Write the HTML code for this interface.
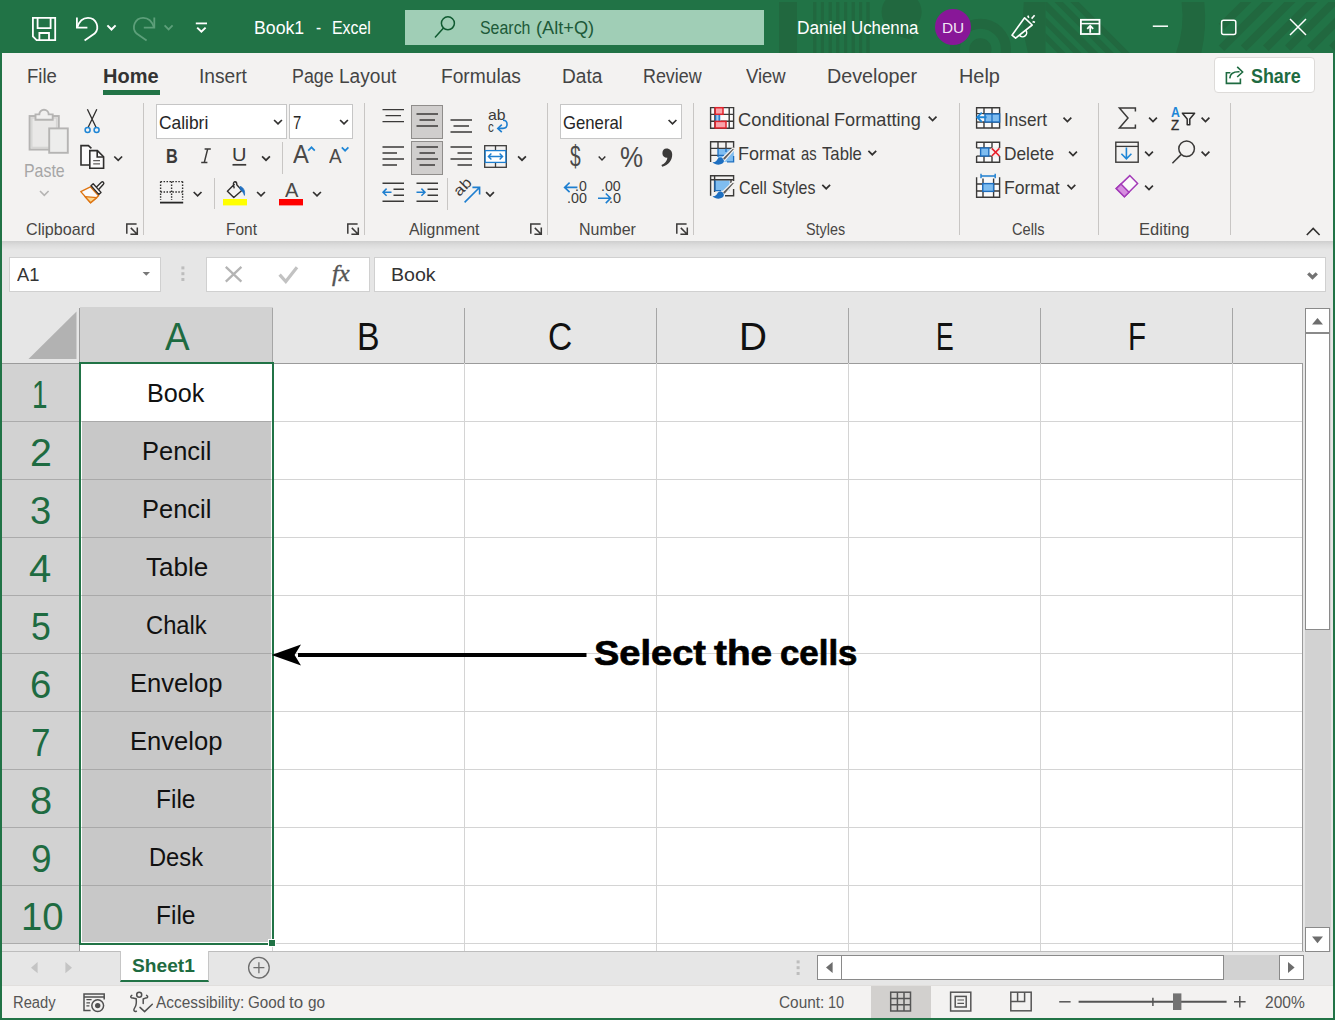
<!DOCTYPE html>
<html lang="en">
<head>
<meta charset="utf-8">
<title>Book1 - Excel</title>
<style>
html,body{margin:0;padding:0}
body{width:1335px;height:1020px;position:relative;overflow:hidden;background:#217346;font-family:"Liberation Sans",sans-serif}
div,span,svg{position:absolute;box-sizing:border-box}
.t{white-space:pre;line-height:1;transform-origin:0 0}
#title{left:0;top:0;width:1335px;height:53px;background:#217346}
#search{left:405px;top:10px;width:359px;height:35px;background:#a0ceb6}
#avatar{left:935px;top:9px;width:36px;height:36px;border-radius:50%;background:#881798}
#ribbon{left:2px;top:53px;width:1331px;height:188px;background:#f3f2f1}
#homeul{left:103px;top:90px;width:57px;height:5px;background:#217346}
#share{left:1214px;top:57px;width:101px;height:36px;background:#fff;border:1px solid #dddbd9;border-radius:4px}
.vsep{width:1px;background:#c8c6c4}
.box{background:#fff;border:1px solid #c6c6c6}
.sel{background:#d0cecd;border:1px solid #8f8d8b}
#shadow{left:2px;top:241px;width:1331px;height:9px;background:linear-gradient(#cecece,#dcdcdc 45%,#e6e6e6)}
#work{left:2px;top:241px;width:1331px;height:744px;background:#e6e6e6}
#grid{left:80px;top:363px;width:1223px;height:588px;background:#fff}
.hl{left:80px;width:1222px;height:1px;background:#d4d4d4}
.vl{top:363px;width:1px;height:588px;background:#d4d4d4}
.hv{top:308px;width:1px;height:55px;background:#a6a6a6}
.rl{left:2px;width:78px;height:1px;background:#ababab}
#status{left:2px;top:985px;width:1331px;height:33px;background:#f3f2f1;border-top:1px solid #e1dfdd}
</style>
</head>
<body>

<!-- ======================= TITLE BAR ======================= -->
<div id="title"></div>
<svg style="left:0;top:0" width="1335" height="53" viewBox="0 0 1335 53">
<!-- title bar decorative pattern -->
<defs>
  <clipPath id="cpA"><rect x="1045.500" y="2" width="95" height="51"/></clipPath>
</defs>
<g fill="#21683f" stroke="none">
  <rect x="779" y="2" width="18" height="51"/>
  <rect x="813.2" y="2" width="3.2" height="51"/><rect x="820.8" y="2" width="3.2" height="51"/><rect x="828.6" y="2" width="3.2" height="51"/><rect x="836.2" y="2" width="3.2" height="51"/><rect x="844.0" y="2" width="3.2" height="51"/><rect x="851.6" y="2" width="3.2" height="51"/><rect x="859.0" y="2" width="3.2" height="51"/><rect x="866.4" y="2" width="3.2" height="51"/>
  <circle cx="901.6" cy="12" r="20"/>
  <path d="M893,28 L915,28 L912,40 L898,36 Z"/>
  <circle cx="980.400" cy="49.300" r="25.550" fill="none" stroke="#21683f" stroke-width="10.100"/>
  <circle cx="980.400" cy="49.300" r="11.100"/>
  <path d="M1023.800,2 H1045.500 V53 H1028 Q1021,28 1023.800,2 Z"/>
  <g clip-path="url(#cpA)"><path d="M1006.7,2 L1014.5,2 L1065.5,53 L1057.7,53 Z"/><path d="M1022.4,2 L1030.3,2 L1081.3,53 L1073.4,53 Z"/><path d="M1037.7,2 L1047.1,2 L1098.1,53 L1088.7,53 Z"/><path d="M1054.6,2 L1062.8,2 L1113.8,53 L1105.6,53 Z"/><path d="M1070.3,2 L1078.6,2 L1129.6,53 L1121.3,53 Z"/></g>
  <path d="M1181.600,2 H1204.300 Q1207,28 1201.300,53 H1176 Q1185,28 1181.600,2 Z"/>
  <path d="M1240.5,2 L1251.5,2 L1224.2,29.3 L1218.7,23.8 Z"/><path d="M1262.3,2 L1273.3,2 L1224.3,51 L1218.8,45.500 Z"/><path d="M1284.4,2 L1295.4,2 L1246.4,51 L1240.9,45.500 Z"/><path d="M1306.5,2 L1317.5,2 L1268.5,51 L1263.0,45.500 Z"/><path d="M1328.6,2 L1339.6,2 L1290.6,51 L1285.1,45.500 Z"/><path d="M1350.7,2 L1361.7,2 L1312.7,51 L1307.2,45.500 Z"/><path d="M1372.8,2 L1383.8,2 L1334.8,51 L1329.3,45.500 Z"/>
</g>
</svg>
<div id="search"></div>
<div id="avatar"></div>

<!-- ======================= RIBBON ======================= -->
<div id="ribbon"></div>
<div id="homeul"></div>
<div id="share"></div>

<!-- group separators -->
<div class="vsep" style="left:143px;top:103px;height:132px"></div>
<div class="vsep" style="left:364px;top:103px;height:132px"></div>
<div class="vsep" style="left:547px;top:103px;height:132px"></div>
<div class="vsep" style="left:693px;top:103px;height:132px"></div>
<div class="vsep" style="left:959px;top:103px;height:132px"></div>
<div class="vsep" style="left:1098px;top:103px;height:132px"></div>
<div class="vsep" style="left:1230px;top:103px;height:132px"></div>
<!-- small separators -->
<div class="vsep" style="left:282px;top:142px;height:32px"></div>
<div class="vsep" style="left:214px;top:178px;height:31px"></div>
<div class="vsep" style="left:447px;top:178px;height:32px"></div>

<!-- combo boxes -->
<div class="box" style="left:156px;top:104px;width:131px;height:35px"></div>
<div class="box" style="left:289px;top:104px;width:64px;height:35px"></div>
<div class="box" style="left:560px;top:104px;width:122px;height:35px"></div>
<!-- pressed alignment buttons -->
<div class="sel" style="left:411px;top:105px;width:32px;height:34px"></div>
<div class="sel" style="left:411px;top:141px;width:32px;height:34px"></div>


<!-- ======================= FORMULA BAR / SHEET ======================= -->
<div id="work"></div>
<div id="shadow"></div>
<div class="box" style="left:9px;top:257px;width:152px;height:35px;border-color:#d0d0d0"></div>
<div class="box" style="left:206px;top:257px;width:164px;height:35px;border-color:#d0d0d0"></div>
<div class="box" style="left:374px;top:257px;width:952px;height:35px;border-color:#d0d0d0"></div>

<!-- headers -->
<div style="left:80px;top:307px;width:193px;height:56px;background:#d2d2d2"></div>
<div style="left:2px;top:363px;width:78px;height:581px;background:#d2d2d2"></div>
<div style="left:79px;top:308px;width:1px;height:643px;background:#9b9b9b"></div>
<div class="hv" style="left:272px"></div>
<div class="hv" style="left:464px"></div>
<div class="hv" style="left:656px"></div>
<div class="hv" style="left:848px"></div>
<div class="hv" style="left:1040px"></div>
<div class="hv" style="left:1232px"></div>
<svg style="left:28px;top:311px" width="50" height="49"><polygon points="48.5,0.5 48.5,48 0.5,48" fill="#b2b2b2"/></svg>

<!-- grid -->
<div id="grid"></div>
<div style="left:2px;top:363px;width:1301px;height:1px;background:#9b9b9b"></div>
<div class="hl" style="top:421px"></div>
<div class="rl" style="top:421px"></div>
<div class="hl" style="top:479px"></div>
<div class="rl" style="top:479px"></div>
<div class="hl" style="top:537px"></div>
<div class="rl" style="top:537px"></div>
<div class="hl" style="top:595px"></div>
<div class="rl" style="top:595px"></div>
<div class="hl" style="top:653px"></div>
<div class="rl" style="top:653px"></div>
<div class="hl" style="top:711px"></div>
<div class="rl" style="top:711px"></div>
<div class="hl" style="top:769px"></div>
<div class="rl" style="top:769px"></div>
<div class="hl" style="top:827px"></div>
<div class="rl" style="top:827px"></div>
<div class="hl" style="top:885px"></div>
<div class="rl" style="top:885px"></div>
<div class="hl" style="top:943px"></div>
<div class="rl" style="top:943px"></div>
<div class="vl" style="left:272px"></div>
<div class="vl" style="left:464px"></div>
<div class="vl" style="left:656px"></div>
<div class="vl" style="left:848px"></div>
<div class="vl" style="left:1040px"></div>
<div class="vl" style="left:1232px"></div>
<div style="left:1302px;top:363px;width:1px;height:588px;background:#9b9b9b"></div>

<!-- selection -->
<div style="left:82px;top:421px;width:189px;height:521px;background:#c8c8c8"></div>
<div style="left:82px;top:421px;width:189px;height:1px;background:#a9a9a9"></div>
<div style="left:82px;top:479px;width:189px;height:1px;background:#a9a9a9"></div>
<div style="left:82px;top:537px;width:189px;height:1px;background:#a9a9a9"></div>
<div style="left:82px;top:595px;width:189px;height:1px;background:#a9a9a9"></div>
<div style="left:82px;top:653px;width:189px;height:1px;background:#a9a9a9"></div>
<div style="left:82px;top:711px;width:189px;height:1px;background:#a9a9a9"></div>
<div style="left:82px;top:769px;width:189px;height:1px;background:#a9a9a9"></div>
<div style="left:82px;top:827px;width:189px;height:1px;background:#a9a9a9"></div>
<div style="left:82px;top:885px;width:189px;height:1px;background:#a9a9a9"></div>
<div style="left:82px;top:943px;width:189px;height:1px;background:#a9a9a9"></div>
<div style="left:79px;top:362px;width:195px;height:583px;border:2px solid #217346"></div>
<div style="left:268px;top:939px;width:8px;height:8px;background:#217346;border:1px solid #fff"></div>

<!-- scrollbars -->
<div style="left:1305px;top:308px;width:26px;height:644px;background:#d2d2d2"></div>
<div class="box" style="left:1305px;top:308px;width:25px;height:25px;border-color:#8a8a8a"></div>
<div class="box" style="left:1305px;top:333px;width:25px;height:297px;border-color:#8a8a8a"></div>
<div class="box" style="left:1305px;top:927px;width:25px;height:25px;border-color:#8a8a8a"></div>

<div style="left:817px;top:955px;width:487px;height:25px;background:#d2d2d2"></div>
<div class="box" style="left:817px;top:955px;width:25px;height:25px;border-color:#8a8a8a"></div>
<div class="box" style="left:841px;top:955px;width:383px;height:25px;border-color:#8a8a8a"></div>
<div class="box" style="left:1279px;top:955px;width:25px;height:25px;border-color:#8a8a8a"></div>

<!-- sheet tab -->
<div style="left:2px;top:951px;width:1302px;height:1px;background:#bdbdbd"></div>
<div style="left:120px;top:951px;width:89px;height:31px;background:#fff;border-left:1px solid #c6c6c6;border-right:1px solid #c6c6c6;border-bottom:2px solid #217346"></div>

<!-- ======================= STATUS BAR ======================= -->
<div id="status"></div>
<div style="left:871px;top:986px;width:60px;height:32px;background:#d2d0ce"></div>

<span class="t" style="left:253.78px;top:17.95px;font-size:19.2px;font-weight:400;color:#fff;transform:scaleX(0.9216);">Book1</span>
<span class="t" style="left:316.20px;top:17.95px;font-size:19.2px;font-weight:400;color:#fff;transform:scaleX(0.8000);">-</span>
<span class="t" style="left:331.97px;top:17.95px;font-size:19.2px;font-weight:400;color:#fff;transform:scaleX(0.8285);">Excel</span>
<span class="t" style="left:479.70px;top:17.95px;font-size:19.2px;font-weight:400;color:#1d5a39;transform:scaleX(0.8300);">Search</span>
<span class="t" style="left:535.65px;top:17.95px;font-size:19.2px;font-weight:400;color:#1d5a39;transform:scaleX(0.9481);">(Alt+Q)</span>
<span class="t" style="left:797.20px;top:17.65px;font-size:19.2px;font-weight:400;color:#fff;transform:scaleX(0.9015);">Daniel</span>
<span class="t" style="left:850.62px;top:17.65px;font-size:19.2px;font-weight:400;color:#fff;transform:scaleX(0.8787);">Uchenna</span>
<span class="t" style="left:942.09px;top:20.13px;font-size:15.2px;font-weight:400;color:#f3e6f5;transform:scaleX(1.0116);">DU</span>
<span class="t" style="left:27.05px;top:66.91px;font-size:19.6px;font-weight:400;color:#444;transform:scaleX(0.9454);">File</span>
<span class="t" style="left:102.98px;top:66.91px;font-size:19.6px;font-weight:700;color:#333;transform:scaleX(1.0198);">Home</span>
<span class="t" style="left:199.02px;top:66.91px;font-size:19.6px;font-weight:400;color:#444;transform:scaleX(0.9782);">Insert</span>
<span class="t" style="left:291.79px;top:66.91px;font-size:19.6px;font-weight:400;color:#444;transform:scaleX(0.9094);">Page</span>
<span class="t" style="left:339.43px;top:66.91px;font-size:19.6px;font-weight:400;color:#444;transform:scaleX(0.9746);">Layout</span>
<span class="t" style="left:440.72px;top:66.91px;font-size:19.6px;font-weight:400;color:#444;transform:scaleX(0.9782);">Formulas</span>
<span class="t" style="left:561.82px;top:66.91px;font-size:19.6px;font-weight:400;color:#444;transform:scaleX(0.9755);">Data</span>
<span class="t" style="left:643.09px;top:66.91px;font-size:19.6px;font-weight:400;color:#444;transform:scaleX(0.9127);">Review</span>
<span class="t" style="left:745.50px;top:66.91px;font-size:19.6px;font-weight:400;color:#444;transform:scaleX(0.9426);">View</span>
<span class="t" style="left:826.99px;top:66.91px;font-size:19.6px;font-weight:400;color:#444;transform:scaleX(1.0080);">Developer</span>
<span class="t" style="left:959.48px;top:66.91px;font-size:19.6px;font-weight:400;color:#444;transform:scaleX(1.0152);">Help</span>
<span class="t" style="left:1250.60px;top:66.07px;font-size:20px;font-weight:700;color:#1e6b41;transform:scaleX(0.8943);">Share</span>
<span class="t" style="left:24.34px;top:162.34px;font-size:18.5px;font-weight:400;color:#a6a6a6;transform:scaleX(0.8605);">Paste</span>
<span class="t" style="left:159.40px;top:113.76px;font-size:18.6px;font-weight:400;color:#262626;transform:scaleX(0.9348);">Calibri</span>
<span class="t" style="left:292.50px;top:113.76px;font-size:18.6px;font-weight:400;color:#262626;transform:scaleX(0.8000);">7</span>
<span class="t" style="left:563.00px;top:113.76px;font-size:18.6px;font-weight:400;color:#262626;transform:scaleX(0.8997);">General</span>
<span class="t" style="left:738.30px;top:109.92px;font-size:19px;font-weight:400;color:#3b3a39;transform:scaleX(0.9633);">Conditional</span>
<span class="t" style="left:834.44px;top:109.92px;font-size:19px;font-weight:400;color:#3b3a39;transform:scaleX(0.9559);">Formatting</span>
<span class="t" style="left:737.95px;top:143.92px;font-size:19px;font-weight:400;color:#3b3a39;transform:scaleX(0.9467);">Format</span>
<span class="t" style="left:800.80px;top:143.92px;font-size:19px;font-weight:400;color:#3b3a39;transform:scaleX(0.7768);">as</span>
<span class="t" style="left:822.30px;top:143.92px;font-size:19px;font-weight:400;color:#3b3a39;transform:scaleX(0.8784);">Table</span>
<span class="t" style="left:738.50px;top:177.92px;font-size:19px;font-weight:400;color:#3b3a39;transform:scaleX(0.8474);">Cell</span>
<span class="t" style="left:772.00px;top:177.92px;font-size:19px;font-weight:400;color:#3b3a39;transform:scaleX(0.8392);">Styles</span>
<span class="t" style="left:1004.40px;top:109.92px;font-size:19px;font-weight:400;color:#3b3a39;transform:scaleX(0.9039);">Insert</span>
<span class="t" style="left:1004.49px;top:143.92px;font-size:19px;font-weight:400;color:#3b3a39;transform:scaleX(0.9109);">Delete</span>
<span class="t" style="left:1004.48px;top:177.92px;font-size:19px;font-weight:400;color:#3b3a39;transform:scaleX(0.9250);">Format</span>
<span class="t" style="left:26.00px;top:221.29px;font-size:16.2px;font-weight:400;color:#484644;transform:scaleX(0.9958);">Clipboard</span>
<span class="t" style="left:225.54px;top:221.29px;font-size:16.2px;font-weight:400;color:#484644;transform:scaleX(0.9563);">Font</span>
<span class="t" style="left:408.50px;top:221.29px;font-size:16.2px;font-weight:400;color:#484644;transform:scaleX(0.9795);">Alignment</span>
<span class="t" style="left:578.51px;top:221.29px;font-size:16.2px;font-weight:400;color:#484644;transform:scaleX(0.9881);">Number</span>
<span class="t" style="left:806.00px;top:221.29px;font-size:16.2px;font-weight:400;color:#484644;transform:scaleX(0.8866);">Styles</span>
<span class="t" style="left:1012.00px;top:221.29px;font-size:16.2px;font-weight:400;color:#484644;transform:scaleX(0.9057);">Cells</span>
<span class="t" style="left:1138.98px;top:221.29px;font-size:16.2px;font-weight:400;color:#484644;transform:scaleX(1.0212);">Editing</span>
<span class="t" style="left:16.50px;top:265.64px;font-size:18.5px;font-weight:400;color:#333;transform:scaleX(0.9893);">A1</span>
<span class="t" style="left:390.94px;top:265.64px;font-size:18.5px;font-weight:400;color:#333;transform:scaleX(1.0592);">Book</span>
<span class="t" style="left:164.60px;top:316.99px;font-size:39px;font-weight:400;color:#1e6b41;transform:scaleX(0.9462);">A</span>
<span class="t" style="left:357.20px;top:316.99px;font-size:39px;font-weight:400;color:#111;transform:scaleX(0.8667);">B</span>
<span class="t" style="left:547.94px;top:316.99px;font-size:39px;font-weight:400;color:#111;transform:scaleX(0.8615);">C</span>
<span class="t" style="left:738.62px;top:316.99px;font-size:39px;font-weight:400;color:#111;transform:scaleX(0.9917);">D</span>
<span class="t" style="left:936.35px;top:316.99px;font-size:39px;font-weight:400;color:#111;transform:scaleX(0.6818);">E</span>
<span class="t" style="left:1128.12px;top:316.99px;font-size:39px;font-weight:400;color:#111;transform:scaleX(0.7600);">F</span>
<span class="t" style="left:32.33px;top:375.83px;font-size:38px;font-weight:400;color:#1e6b41;transform:scaleX(0.7333);">1</span>
<span class="t" style="left:29.86px;top:433.83px;font-size:38px;font-weight:400;color:#1e6b41;transform:scaleX(1.0368);">2</span>
<span class="t" style="left:29.89px;top:491.83px;font-size:38px;font-weight:400;color:#1e6b41;transform:scaleX(1.0053);">3</span>
<span class="t" style="left:29.40px;top:549.83px;font-size:38px;font-weight:400;color:#1e6b41;transform:scaleX(1.0524);">4</span>
<span class="t" style="left:31.06px;top:607.83px;font-size:38px;font-weight:400;color:#1e6b41;transform:scaleX(0.9368);">5</span>
<span class="t" style="left:30.29px;top:665.83px;font-size:38px;font-weight:400;color:#1e6b41;transform:scaleX(1.0105);">6</span>
<span class="t" style="left:31.08px;top:723.83px;font-size:38px;font-weight:400;color:#1e6b41;transform:scaleX(0.9211);">7</span>
<span class="t" style="left:30.25px;top:781.83px;font-size:38px;font-weight:400;color:#1e6b41;transform:scaleX(1.0474);">8</span>
<span class="t" style="left:31.03px;top:839.83px;font-size:38px;font-weight:400;color:#1e6b41;transform:scaleX(0.9737);">9</span>
<span class="t" style="left:20.59px;top:897.83px;font-size:38px;font-weight:400;color:#1e6b41;transform:scaleX(1.0068);">10</span>
<span class="t" style="left:147.38px;top:381.24px;font-size:25px;font-weight:400;color:#111;transform:scaleX(1.0075);">Book</span>
<span class="t" style="left:141.96px;top:439.24px;font-size:25px;font-weight:400;color:#111;transform:scaleX(1.0180);">Pencil</span>
<span class="t" style="left:141.96px;top:497.24px;font-size:25px;font-weight:400;color:#111;transform:scaleX(1.0180);">Pencil</span>
<span class="t" style="left:146.00px;top:555.24px;font-size:25px;font-weight:400;color:#111;transform:scaleX(1.0431);">Table</span>
<span class="t" style="left:146.05px;top:613.24px;font-size:25px;font-weight:400;color:#111;transform:scaleX(0.9493);">Chalk</span>
<span class="t" style="left:130.25px;top:671.24px;font-size:25px;font-weight:400;color:#111;transform:scaleX(1.0236);">Envelop</span>
<span class="t" style="left:130.25px;top:729.24px;font-size:25px;font-weight:400;color:#111;transform:scaleX(1.0236);">Envelop</span>
<span class="t" style="left:156.44px;top:787.24px;font-size:25px;font-weight:400;color:#111;transform:scaleX(0.9791);">File</span>
<span class="t" style="left:148.50px;top:845.24px;font-size:25px;font-weight:400;color:#111;transform:scaleX(0.9485);">Desk</span>
<span class="t" style="left:156.44px;top:903.24px;font-size:25px;font-weight:400;color:#111;transform:scaleX(0.9791);">File</span>
<span class="t" style="left:593.71px;top:634.57px;font-size:35px;font-weight:700;color:#000;transform:scaleX(1.0853);-webkit-text-stroke:0.7px #000;">Select</span>
<span class="t" style="left:713.60px;top:634.57px;font-size:35px;font-weight:700;color:#000;transform:scaleX(1.1070);-webkit-text-stroke:0.7px #000;">the</span>
<span class="t" style="left:780.00px;top:634.57px;font-size:35px;font-weight:700;color:#000;transform:scaleX(0.9950);-webkit-text-stroke:0.7px #000;">cells</span>
<span class="t" style="left:132.20px;top:957.29px;font-size:18.8px;font-weight:700;color:#1e6b41;transform:scaleX(1.0205);">Sheet1</span>
<span class="t" style="left:12.58px;top:994.96px;font-size:16px;font-weight:400;color:#555;transform:scaleX(0.9215);">Ready</span>
<span class="t" style="left:156.40px;top:994.96px;font-size:16px;font-weight:400;color:#555;transform:scaleX(0.9630);">Accessibility:</span>
<span class="t" style="left:247.50px;top:994.96px;font-size:16px;font-weight:400;color:#555;transform:scaleX(0.9492);">Good</span>
<span class="t" style="left:288.80px;top:994.96px;font-size:16px;font-weight:400;color:#555;transform:scaleX(1.0561);">to</span>
<span class="t" style="left:307.70px;top:994.96px;font-size:16px;font-weight:400;color:#555;transform:scaleX(0.9554);">go</span>
<span class="t" style="left:778.60px;top:994.96px;font-size:16px;font-weight:400;color:#555;transform:scaleX(0.9607);">Count:</span>
<span class="t" style="left:828.39px;top:994.96px;font-size:16px;font-weight:400;color:#555;transform:scaleX(0.9054);">10</span>
<span class="t" style="left:1264.50px;top:994.96px;font-size:16px;font-weight:400;color:#555;transform:scaleX(0.9706);">200%</span>
<span class="t" style="left:166.18px;top:146.07px;font-size:20px;font-weight:700;color:#3b3a39;transform:scaleX(0.8154);">B</span>
<span class="t" style="left:232.32px;top:146.34px;font-size:18.5px;font-weight:400;color:#3b3a39;transform:scaleX(1.0818);">U</span>
<span class="t" style="left:292.60px;top:142.41px;font-size:25.5px;font-weight:400;color:#4a4948;transform:scaleX(0.9294);">A</span>
<span class="t" style="left:329.20px;top:147.49px;font-size:19.5px;font-weight:400;color:#4a4948;transform:scaleX(0.9692);">A</span>
<span class="t" style="left:284.60px;top:179.42px;font-size:21px;font-weight:400;color:#4a4948;transform:scaleX(0.9571);">A</span>
<span class="t" style="left:569.80px;top:142.35px;font-size:29px;font-weight:400;color:#4a4948;transform:scaleX(0.6625);">$</span>
<span class="t" style="left:620.34px;top:142.00px;font-size:30px;font-weight:400;color:#4a4948;transform:scaleX(0.8640);">%</span>
<span class="t" style="left:487.80px;top:107.10px;font-size:15px;font-weight:400;color:#3b3a39;transform:scaleX(1.0525);">ab</span>
<span class="t" style="left:487.80px;top:118.50px;font-size:15px;font-weight:400;color:#3b3a39;transform:scaleX(0.7750);">c</span>
<span class="t" style="left:575.23px;top:178.93px;font-size:14.5px;font-weight:400;color:#3b3a39;transform:scaleX(0.9702);">.0</span>
<span class="t" style="left:567.02px;top:190.93px;font-size:14.5px;font-weight:400;color:#3b3a39;transform:scaleX(0.9847);">.00</span>
<span class="t" style="left:601.23px;top:178.93px;font-size:14.5px;font-weight:400;color:#3b3a39;transform:scaleX(0.9742);">.00</span>
<span class="t" style="left:608.80px;top:190.93px;font-size:14.5px;font-weight:400;color:#3b3a39;transform:scaleX(0.9974);">.0</span>
<span class="t" style="left:1171.40px;top:104.55px;font-size:14px;font-weight:700;color:#1e86d6;transform:scaleX(0.8800);">A</span>
<span class="t" style="left:1171.40px;top:117.85px;font-size:14px;font-weight:400;color:#2f2e2d;transform:scaleX(0.9556);-webkit-text-stroke:0.35px #2f2e2d;">Z</span>
<span class="t" style="left:332.00px;top:260.68px;font-size:24px;font-weight:400;color:#555;transform:scaleX(1.0188);-webkit-text-stroke:0.4px #555;font-style:italic;font-family:'Liberation Serif',serif;">fx</span>

<svg style="left:0;top:0" width="1335" height="1020" viewBox="0 0 1335 1020" fill="none" stroke-linecap="butt" stroke-linejoin="miter">
<defs>
  <path id="chev" d="M-3.900,-2 L0,1.900 L3.900,-2" fill="none" stroke="#323130" stroke-width="1.7"/>
  <path id="launch" d="M0.8,10.800 V0.900 H10.600 M4.800,4.900 L11.200,11.200 M11.300,4.400 V11.200 H4.400" fill="none" stroke="#3b3a39" stroke-width="1.500"/>
</defs>


<!-- ============ quick access toolbar ============ -->
<g stroke="#fff" stroke-width="1.8">
  <!-- save -->
  <path d="M32.9,17.9 H55.2 V40.2 H36.6 L32.9,36.5 Z"/>
  <path d="M37.6,18 V28.2 H50.6 V18"/>
  <path d="M39.4,40 V33 H49 V40"/>
  <!-- undo -->
  <path d="M76.9,17.4 V27.7 H87.4"/>
  <path d="M77.2,27.4 C79,21.6 83,17.8 88,17.8 A9.3,9.3 0 0 1 94.6,33.6 L84.6,40.6"/>
  <path d="M107.4,25.4 L111.5,29.5 L115.6,25.4" stroke-width="2"/>
  <!-- customise -->
  <path d="M195.8,23.4 H207"/>
  <path d="M197.2,27.6 L201.4,31.6 L205.6,27.6" stroke-width="2"/>
</g>
<g stroke="#5d9f7a" stroke-width="1.8">
  <!-- redo (disabled) -->
  <path d="M154.3,17.4 V27.7 H143.8"/>
  <path d="M154,27.4 C152.2,21.6 148.2,17.8 143.2,17.8 A9.3,9.3 0 0 0 136.6,33.6 L146.6,40.6"/>
  <path d="M164.6,25.4 L168.6,29.4 L172.6,25.4"/>
</g>
<!-- search icon -->
<g stroke="#0f5a30" stroke-width="1.5" stroke-linecap="round">
  <circle cx="447.9" cy="23.3" r="6.5"/>
  <path d="M443.3,28.3 L435.4,37"/>
</g>
<!-- coming soon (megaphone) -->
<g stroke="#fff" stroke-width="1.6" stroke-linejoin="round">
  <path d="M1024.6,17.8 L1032.2,25 L1015.6,38.2 L1012,35.2 Z"/>
  <path d="M1019.4,35.2 A3.9,3.9 0 0 0 1025.8,30.2"/>
  <path d="M1027.8,15.6 L1028.8,17.8"/><path d="M1031.6,18.6 L1034.6,15.2"/><path d="M1032.6,21.6 L1035,22.2"/>
</g>
<!-- ribbon display options -->
<g stroke="#fff" stroke-width="1.8">
  <rect x="1080.9" y="19.8" width="18.6" height="14.2"/>
  <path d="M1081,23.6 H1099.4" stroke-width="1.5"/>
  <path d="M1090.2,32.8 V26"/><path d="M1087.2,28.8 L1090.2,25.8 L1093.2,28.8"/>
</g>
<!-- window controls -->
<g stroke="#fff" stroke-width="1.5">
  <path d="M1152.8,26.2 H1168"/>
  <rect x="1221.6" y="20.2" width="14.2" height="14.2" rx="2"/>
  <path d="M1290,19 L1306,35 M1306,19 L1290,35"/>
</g>
<!-- share icon -->
<g stroke="#1e6b41" stroke-width="1.600">
  <path d="M1230.400,72.800 H1226.400 V83.400 H1240.400 V78.600"/>
  <path d="M1229.800,78.400 C1230,73.800 1233.600,71.600 1239.500,71.800"/>
  <path d="M1237.200,66.800 L1242.600,72 L1237.200,77"/>
</g>

<!-- ============ CLIPBOARD ============ -->
<!-- paste (disabled) -->
<g stroke="#b5b4b3" stroke-width="1.9">
  <rect x="29.6" y="116" width="29.2" height="33.6" fill="#e3e2e1"/>
  <rect x="31.8" y="118" width="24.8" height="29.4" fill="#e9e8e7" stroke="#d6d5d4" stroke-width="1.4"/>
  <path d="M35.5,119.8 V114.4 H39.3 A4.7,4.7 0 0 1 48.700,114.4 H52.700 V119.8 Z" fill="#f1f0ef"/>
  <rect x="49.2" y="128.400" width="18.600" height="24.400" fill="#ededec"/>
</g>
<path d="M40,191 L44.300,195.300 L48.600,191" stroke="#b5b4b3" stroke-width="1.6"/>
<!-- cut -->
<g>
  <path d="M87.400,109.200 L96,127.200 M96.800,109.200 L88.200,127.200" stroke="#2f2e2d" stroke-width="1.300"/>
  <circle cx="87.600" cy="130" r="2.500" stroke="#1e86d6" stroke-width="1.500"/><circle cx="96.600" cy="130" r="2.500" stroke="#1e86d6" stroke-width="1.500"/>
</g>
<!-- copy -->
<g stroke="#2f2e2d" stroke-width="1.600">
  <path d="M89.200,165 H81 V145.600 H88.400 L91.400,148.400" fill="#fbfafa"/>
  <path d="M89.800,150.600 H97.400 L103.600,156.800 V168.200 H89.800 Z" fill="#fbfafa"/>
  <path d="M97.200,150.800 V157 H103.400"/>
  <path d="M93.200,160.600 H100 M93.200,163.800 H100" stroke-width="1.200" stroke="#605e5c"/>
</g>
<use href="#chev" x="118.200" y="158.500"/>
<!-- format painter -->
<g stroke-width="1.400" stroke-linejoin="round">
  <path d="M80.800,191.600 L90.400,186.800 L98.600,195.800 L90.600,202.800 Z" stroke="#de7512" fill="#fbfafa"/>
  <path d="M85,196.600 L96.800,197.600 L90.600,202.800 Z" stroke="#de7512" fill="#fbd68e"/>
  <path d="M96,187.400 L101.400,182.200 C102.800,181 104.600,182.800 103.400,184.200 L98.400,189.800" stroke="#2f2e2d" fill="#fbfafa"/>
  <path d="M91,185.800 L93.200,183.800 L101,192.400 L98.800,194.400 Z" stroke="#2f2e2d" fill="#fbfafa"/>
</g>
<use href="#launch" x="126" y="223"/>

<!-- ============ FONT ============ -->
<use href="#chev" x="278" y="122"/>
<use href="#chev" x="344" y="122"/>
<!-- grow / shrink font -->
<g stroke="#1e86d6" stroke-width="1.7">
  <path d="M308.2,150.6 L311.5,147.3 L314.8,150.6"/>
  <path d="M341.8,147.4 L345.1,150.7 L348.4,147.4"/>
</g>
<use href="#chev" x="266" y="158.3"/>
<!-- borders -->
<g stroke="#2f2e2d" stroke-width="1.4" stroke-dasharray="1.5 1.45">
  <path d="M160.6,181.6 H182.6 M160.6,181.6 V200 M182.6,181.6 V200 M171.6,181.6 V200 M160.6,192 H182.6"/>
</g>
<path d="M160,202.6 H183.2" stroke="#262626" stroke-width="1.8"/>
<use href="#chev" x="197.6" y="194"/>
<!-- fill colour -->
<g stroke="#2f2e2d" stroke-width="1.400" stroke-linejoin="round">
  <path d="M234.600,184 L227.400,191.200 L233.800,197.600 L241.800,190.400 L236.800,184.800 C237,181 233.200,180.800 233.400,184.200 L234.200,188.400"/>
</g>
<path d="M240.200,186.400 C243.800,187.600 245.200,191.200 244.400,195.400 C243.600,192.600 242.200,190.600 240,189.400 Z" fill="#1e6fc0" stroke="#1e6fc0" stroke-width="0.800"/>
<rect x="223" y="199" width="24" height="6.4" fill="#ffff00" stroke="none"/>
<use href="#chev" x="261" y="194"/>
<!-- font colour -->
<rect x="279" y="199" width="24" height="6.4" fill="#ff0000" stroke="none"/>
<use href="#chev" x="317" y="194"/>
<use href="#launch" x="347" y="223"/>
<!-- U underline -->
<path d="M232.500,164.800 H246.200" stroke="#3b3a39" stroke-width="1.700"/>
<!-- italic I -->
<path d="M204.600,148.900 H210.800 M201.200,162.400 H207.400 M207.700,148.900 L204.300,162.400" stroke="#3b3a39" stroke-width="1.500"/>

<!-- ============ ALIGNMENT ============ -->
<g stroke="#3b3a39" stroke-width="1.4">
  <!-- top / middle / bottom -->
  <path d="M382.5,109.6 H404 M385.5,115.6 H401 M382.5,121.6 H404"/>
  <path d="M416.5,114 H438 M419.5,120 H435 M416.5,126 H438"/>
  <path d="M450.5,120 H472 M453.5,126 H469 M450.5,132 H472"/>
  <!-- left / centre / right -->
  <path d="M382.5,147 H404 M382.5,153 H397 M382.5,159 H404 M382.5,165 H397"/>
  <path d="M416.5,147 H438 M419.5,153 H435 M416.5,159 H438 M419.5,165 H435"/>
  <path d="M450.5,147 H472 M457.5,153 H472 M450.5,159 H472 M457.5,165 H472"/>
  <!-- indents -->
  <path d="M382.5,183.2 H404 M393.5,189.2 H404 M393.5,195.2 H404 M382.5,201.2 H404"/>
  <path d="M416.5,183.2 H438 M427.5,189.2 H438 M427.5,195.2 H438 M416.5,201.2 H438"/>
</g>
<g stroke="#1e7fd0" stroke-width="1.5">
  <path d="M383,192.2 H391.5 M386.6,188.6 L383,192.2 L386.6,195.8"/>
  <path d="M416.5,192.2 H425 M421.4,188.6 L425,192.2 L421.4,195.8"/>
</g>
<!-- wrap text arrow -->
<g stroke="#1e7fd0" stroke-width="1.6">
  <path d="M503,120.2 C508.4,120.2 508.4,128.4 503,128.4 H498"/>
  <path d="M501.8,124.6 L497.8,128.4 L501.8,132.2"/>
</g>
<!-- merge & centre -->
<g stroke="#3b3a39" stroke-width="1.3">
  <rect x="484.7" y="145.7" width="21.6" height="21.6"/>
  <path d="M495.5,145.7 V150.6 M495.5,162.4 V167.3"/>
</g>
<rect x="485.2" y="150.6" width="20.6" height="11.8" fill="#fff" stroke="#1e7fd0" stroke-width="1.3"/>
<g stroke="#1e7fd0" stroke-width="1.4">
  <path d="M488.4,156.5 H502.6 M491.4,153.5 L488.4,156.5 L491.4,159.5 M499.6,153.5 L502.6,156.5 L499.6,159.5"/>
</g>
<use href="#chev" x="522" y="158.3"/>
<!-- orientation arrow -->
<g stroke="#1e7fd0" stroke-width="1.6">
  <path d="M464.6,202.4 L479,188 M472.4,187.4 H479.6 V194.6"/>
</g>
<use href="#chev" x="490" y="194.2"/>
<use href="#launch" x="530" y="223"/>

<!-- ============ NUMBER ============ -->
<use href="#chev" x="672.5" y="122"/>
<use href="#chev" x="602" y="158.3" transform="translate(602 158.3) scale(0.85) translate(-602 -158.3)"/>
<!-- comma style -->
<path d="M666.5,148.6 C669.8,148.6 672.2,151 672.2,154.6 C672.2,160.6 668.400,165.200 662.200,166.800 L661.400,165 C665,163.600 667,161 667.4,157.8 C664.6,158 662.4,156.2 662.4,153.2 C662.4,150.6 664,148.6 666.5,148.6 Z" fill="#3b3a39" stroke="none"/>
<!-- increase / decrease decimal arrows -->
<g stroke="#1e7fd0" stroke-width="1.6">
  <path d="M564.600,187.400 H577.400 M569.600,182.600 L564.600,187.400 L569.600,192.200"/>
  <path d="M598,198.300 H610.600 M605.800,193.500 L610.600,198.300 L605.800,203.100"/>
</g>
<use href="#launch" x="676" y="223"/>

<!-- ============ STYLES ============ -->
<!-- conditional formatting -->
<g>
  <rect x="710.6" y="107.6" width="23" height="20.6" fill="#fbfafa" stroke="none"/>
  <path d="M710.6,107.6 H733.6 V128.2 H710.6 Z M710.6,114.4 H733.6 M710.6,121.2 H733.6 M729.2,107.6 V128.2 M714.9,107.6 V128.2" stroke="#3b3a39" stroke-width="1.4"/>
  <rect x="715" y="114.4" width="5.6" height="6.8" fill="#9ccbf2" stroke="none"/>
  <path d="M715.6,114.4 V121.2 M719.2,114.4 V121.2" stroke="#1e6fc0" stroke-width="1.3"/>
  <rect x="715.2" y="107.7" width="7.8" height="6.6" fill="#f9a3aa" stroke="#e0232c" stroke-width="1.5"/>
  <rect x="715.2" y="121.4" width="10.8" height="6.6" fill="#f9a3aa" stroke="#e0232c" stroke-width="1.5"/>
</g>
<!-- format as table -->
<g>
  <rect x="718" y="148.4" width="15.8" height="13.4" fill="#7fbdf0" stroke="none"/>
  <path d="M710.6,162 V141.8 H733.6 V148 M710.6,148.4 H733.6 M710.6,155.4 H718 M718,141.8 V148.4 M726,141.8 V148.4" stroke="#3b3a39" stroke-width="1.4"/>
  <path d="M718,148.4 V157 M726,148.4 V152 M718,155.4 H724" stroke="#1e6fc0" stroke-width="1.3"/>
  <path d="M733.6,156 V161.8 H727" stroke="#1e6fc0" stroke-width="1.3"/>
  <path d="M722.2,158.2 L732.4,148.4 C733.6,147.6 734.8,148.8 734,150 L724.6,160.6 Z" fill="#605e5c" stroke="#f3f2f1" stroke-width="1.2"/>
  <path d="M712.4,162.2 C715.6,162.4 716.6,160.8 717.6,159 C718.8,157.2 721.4,157 722.8,158.4 C724.4,160 724.2,162.4 722.4,163.6 C719.6,165.4 715,165 712.4,162.2 Z" fill="#1e6fc0" stroke="none"/>
</g>
<!-- cell styles -->
<g>
  <rect x="715" y="180.4" width="14.6" height="10.4" fill="#7fbdf0" stroke="none"/>
  <path d="M710.6,195.8 V175.8 H733.6 V181 M733.6,189 V195.8 H725 M710.6,179.8 H733.6 M714.6,175.8 V192 M731,179.8 V183" stroke="#3b3a39" stroke-width="1.4"/>
  <path d="M715,180.4 V190.6 H721" stroke="#1e6fc0" stroke-width="1.3"/>
  <path d="M722.2,192.2 L732.4,182.4 C733.6,181.6 734.8,182.8 734,184 L724.6,194.6 Z" fill="#605e5c" stroke="#f3f2f1" stroke-width="1.2"/>
  <path d="M712.4,196.2 C715.6,196.4 716.6,194.8 717.6,193 C718.8,191.2 721.4,191 722.8,192.4 C724.4,194 724.2,196.4 722.4,197.6 C719.6,199.4 715,199 712.4,196.2 Z" fill="#1e6fc0" stroke="none"/>
</g>
<use href="#chev" x="932.600" y="118.700"/>
<use href="#chev" x="872.300" y="152.800"/>
<use href="#chev" x="826.200" y="186.800"/>

<!-- ============ CELLS ============ -->
<!-- insert -->
<g>
  <rect x="976.6" y="107.8" width="23" height="20.2" fill="#fbfafa" stroke="none"/>
  <path d="M976.6,107.8 H999.6 V128 H976.6 Z M976.6,113.6 H999.6 M976.6,122 H999.6 M984,107.8 V128 M992,107.8 V128" stroke="#3b3a39" stroke-width="1.4"/>
  <rect x="977.4" y="114.4" width="7.4" height="6.8" fill="#fbfafa" stroke="none"/>
  <rect x="985" y="114" width="14.6" height="8" fill="#7fbdf0" stroke="#1e6fc0" stroke-width="1.4"/>
  <path d="M992,114 V122" stroke="#1e6fc0" stroke-width="1.3"/>
  <path d="M977.600,117.200 H986.600 M981.800,112.600 L977.200,117.200 L981.800,121.800" stroke="#1e86d6" stroke-width="1.900"/>
</g>
<use href="#chev" x="1067.4" y="119.6"/>
<!-- delete -->
<g>
  <rect x="976.6" y="142.2" width="23" height="20" fill="#fbfafa" stroke="none"/>
  <path d="M976.6,148 V142.2 H999.6 V148 M976.6,156 V162.2 H999.6 V156 M976.6,148 H999.6 M976.6,156 H999.6 M984,142.2 V148 M992,142.2 V148 M984,156 V162.2 M992,156 V162.2" stroke="#3b3a39" stroke-width="1.4"/>
  <rect x="975.6" y="148.8" width="25" height="6.4" fill="#f3f2f1" stroke="none"/>
  <circle cx="995.6" cy="152" r="5.6" fill="#f3f2f1" stroke="none"/>
  <rect x="980.6" y="148" width="8.2" height="8" fill="#7fbdf0" stroke="#1e6fc0" stroke-width="1.4"/>
  <path d="M991.8,148.4 L999.4,156 M999.4,148.4 L991.8,156" stroke="#e8202a" stroke-width="1.6"/>
</g>
<use href="#chev" x="1073" y="153.6"/>
<!-- format -->
<g>
  <rect x="976.6" y="178" width="23" height="19.2" fill="#fbfafa" stroke="none"/>
  <path d="M976.6,177.2 V197.2 H999.6 V177.2 M976.6,184 H999.6 M976.6,191 H999.6 M983,178.4 V197.2 M993.6,178.4 V197.2" stroke="#3b3a39" stroke-width="1.4"/>
  <rect x="982.8" y="183.6" width="10.8" height="7.8" fill="#7fbdf0" stroke="#1e6fc0" stroke-width="1.4"/>
  <path d="M981,176 H995.2 M981,173.8 V178.2 M995.2,173.8 V178.2" stroke="#1e7fd0" stroke-width="1.4"/>
</g>
<use href="#chev" x="1071.400" y="186.900"/>

<!-- ============ EDITING ============ -->
<!-- autosum -->
<path d="M1135.400,111.400 V108 H1119.400 L1128,118 L1119.400,128 H1135.400 V124.600" stroke="#3b3a39" stroke-width="1.5"/>
<use href="#chev" x="1153" y="119.6"/>
<!-- sort & filter funnel -->
<path d="M1182.400,113.200 H1194.600 L1189.800,119 V124.800 H1187.200 V119 Z" stroke="#2f2e2d" stroke-width="1.500" stroke-linejoin="round"/>
<use href="#chev" x="1205.5" y="119.6"/>
<!-- fill -->
<g>
  <path d="M1115.8,146.4 H1138.2" stroke="#3b3a39" stroke-width="1.3"/>
  <rect x="1115.8" y="142.2" width="22.4" height="20" stroke="#3b3a39" stroke-width="1.4"/>
  <path d="M1126.400,147.400 V158.600 M1121.400,153.800 L1126.400,158.800 L1131.400,153.800" stroke="#1e86d6" stroke-width="1.600"/>
</g>
<use href="#chev" x="1149" y="153.6"/>
<!-- find & select -->
<g stroke="#3b3a39" stroke-width="1.5">
  <circle cx="1186.6" cy="148.8" r="7.8"/>
  <path d="M1181,154.6 L1172.4,163.2"/>
</g>
<use href="#chev" x="1205.5" y="153.6"/>
<!-- clear -->
<g stroke="#a33bb8" stroke-width="1.5">
  <path d="M1116.2,188.6 L1129.8,175.6 L1137.6,183.6 L1124.4,196.8 Z" fill="#fbfafa"/>
  <path d="M1116.2,188.6 L1121,184 L1129,192.2 L1124.4,196.8 Z" fill="#d68fdf"/>
</g>
<use href="#chev" x="1149" y="187.6"/>
<!-- collapse ribbon -->
<path d="M1306.800,235 L1313.200,228.400 L1319.600,235" stroke="#323130" stroke-width="1.600"/>

<!-- ============ FORMULA BAR ============ -->
<path d="M142.6,272 H150 L146.3,275.8 Z" fill="#777" stroke="none"/>
<g fill="#bdbdbd" stroke="none"><rect x="181.4" y="266.400" width="3" height="3"/><rect x="181.4" y="272.200" width="3" height="3"/><rect x="181.4" y="278" width="3" height="3"/></g>
<path d="M225.800,266.800 L241.400,281.600 M241.400,266.800 L225.800,281.600" stroke="#b4b4b4" stroke-width="2.300"/>
<path d="M279.600,274.600 L285.800,281.600 L297,267.200" stroke="#c2c2c2" stroke-width="3.200"/>
<path d="M1308.200,273.300 L1312.500,277.500 L1316.800,273.300" stroke="#737373" stroke-width="3.200"/>

<!-- ============ SCROLLBARS ============ -->
<g fill="#6d6d6d" stroke="none">
  <path d="M1312,324.6 L1317.5,318 L1323,324.6 Z"/>
  <path d="M1312,936.6 L1317.5,943.2 L1323,936.6 Z"/>
  <path d="M832.6,962 L826,967.5 L832.6,973 Z"/>
  <path d="M1288,962 L1294.6,967.5 L1288,973 Z"/>
</g>
<g fill="#bdbdbd" stroke="none"><rect x="796.600" y="960.400" width="3" height="3"/><rect x="796.600" y="966.200" width="3" height="3"/><rect x="796.600" y="972" width="3" height="3"/></g>
<!-- sheet nav -->
<g fill="#c4c4c4" stroke="none">
  <path d="M37.600,962.100 L31,967.700 L37.600,973.300 Z"/><path d="M65.400,962.100 L72,967.700 L65.400,973.300 Z"/>
</g>
<g stroke="#6d6d6d" stroke-width="1.3"><circle cx="258.900" cy="967.700" r="10.300"/><path d="M253.400,967.700 H264.400 M258.900,962.200 V973.200"/></g>

<!-- ============ STATUS BAR ============ -->
<!-- macro record -->
<g stroke="#505050" stroke-width="1.500">
  <path d="M90.600,1010.400 H84 V993.900 H104.200 V999.400"/><path d="M84,997 H104.200"/>
  <path d="M86.400,999.700 H91.600 M86.400,1002.800 H90 M86.400,1005.800 H89.400" stroke-width="1.300"/>
  <circle cx="97.700" cy="1005.600" r="5.900" fill="#f3f2f1"/><circle cx="97.700" cy="1005.600" r="2.700" fill="#505050" stroke="none"/>
</g>
<!-- accessibility -->
<g stroke="#505050" stroke-width="1.500" stroke-linecap="round" stroke-linejoin="round">
  <circle cx="139.200" cy="994.800" r="2.500"/>
  <path d="M131.800,995.400 C129.800,996.400 130.800,998.300 133,998.100 L136.200,998.800 C136.600,1003 136.400,1005.600 134.800,1007.600 C133.200,1009.800 133.600,1012 136.400,1011.300"/>
  <path d="M146.600,995.400 C148.600,996.400 147.600,998.300 145.400,998.100 L143.200,999 V1003.400"/>
  <path d="M140,1007.400 L144.600,1011.600 L152.300,1004.300"/>
</g>
<!-- view buttons -->
<g stroke="#555" stroke-width="1.5">
  <rect x="890.7" y="992.2" width="19.8" height="18.8"/><path d="M897.4,992.2 V1011 M904,992.2 V1011 M890.7,998.6 H910.5 M890.7,1004.8 H910.5"/>
  <rect x="950.6" y="992.2" width="20.2" height="18.8"/><rect x="955.2" y="996.4" width="11" height="10.6"/><path d="M957.4,1000 H964 M957.4,1003.4 H964" stroke-width="1.1"/>
  <rect x="1010.800" y="992.200" width="20.400" height="18.600"/><path d="M1010.800,1001.600 H1024.600 V992.200 M1017.600,992.200 V1001.600"/>
</g>
<!-- zoom slider -->
<g stroke="#555" stroke-width="1.500">
  <path d="M1059.200,1001.800 H1070.600"/><path d="M1078.600,1001.800 H1226.600" stroke-width="1.900"/><path d="M1152.900,997.800 V1006"/>
  <path d="M1234,1001.8 H1245.6 M1239.8,996 V1007.6"/>
</g>
<rect x="1173" y="993.400" width="8.400" height="16.600" fill="#737373" stroke="none"/>

<!-- orientation "ab" -->
<text x="0" y="0" transform="translate(459.2 197) rotate(-45)" font-family="Liberation Sans, sans-serif" font-size="15" fill="#3b3a39" stroke="none" textLength="19" lengthAdjust="spacingAndGlyphs">ab</text>

<!-- ============ ANNOTATION ARROW ============ -->
<path d="M298,655 H586.5" stroke="#000" stroke-width="4"/>
<path d="M271.6,655 L301,644.6 L294.6,655 L301,665.6 Z" fill="#000" stroke="none"/>

</svg>


</body>
</html>
